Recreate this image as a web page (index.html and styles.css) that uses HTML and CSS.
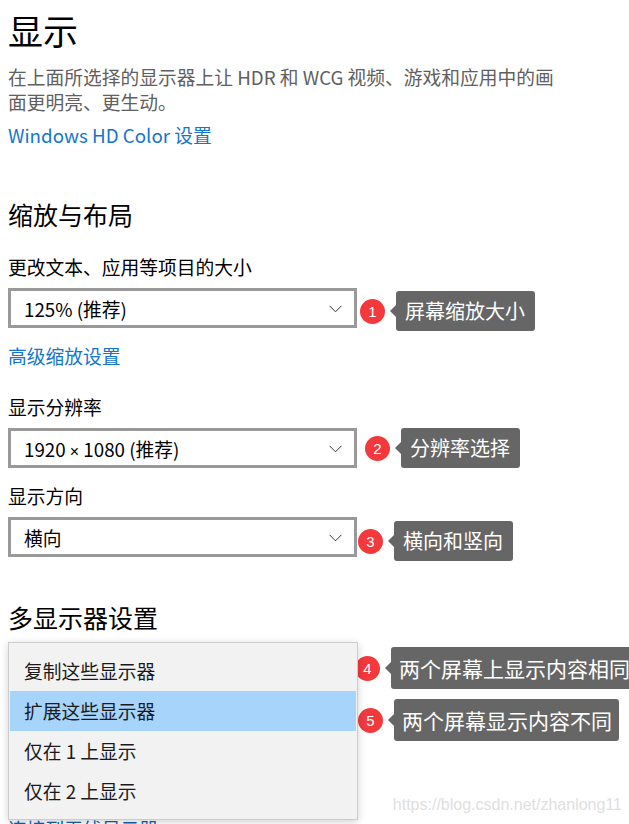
FILE: index.html
```html
<!DOCTYPE html>
<html lang="zh-CN">

<head>
    <meta charset="UTF-8">
    <meta name="viewport" content="width=device-width, initial-scale=1.0">
    <title>显示</title>
    <link rel="stylesheet" href="styles.css">
</head>

<body>
    <div class="page">
        <h1 class="title">显示</h1>
        <p class="desc">在上面所选择的显示器上让 HDR 和 WCG 视频、游戏和应用中的画面更明亮、更生动。</p>
        <a class="link link-hd" href="#">Windows HD Color 设置</a>

        <h2 class="subtitle">缩放与布局</h2>

        <div class="label label-first">更改文本、应用等项目的大小</div>
        <div class="row">
            <div class="combo">
                <span>125% (推荐)</span>
                <svg class="chev" width="13" height="8" viewBox="0 0 13 8"><path d="M0.5 0.8 L6.5 6.8 L12.5 0.8" fill="none" stroke="#333" stroke-width="1"/></svg>
            </div>
            <div class="note note-1">
                <span class="badge">1</span>
                <span class="tip">屏幕缩放大小</span>
            </div>
        </div>
        <a class="link link-adv" href="#">高级缩放设置</a>

        <div class="label label-res">显示分辨率</div>
        <div class="row">
            <div class="combo">
                <span>1920 <span class="times">×</span> 1080 (推荐)</span>
                <svg class="chev" width="13" height="8" viewBox="0 0 13 8"><path d="M0.5 0.8 L6.5 6.8 L12.5 0.8" fill="none" stroke="#333" stroke-width="1"/></svg>
            </div>
            <div class="note note-2">
                <span class="badge">2</span>
                <span class="tip">分辨率选择</span>
            </div>
        </div>

        <div class="label label-dir">显示方向</div>
        <div class="row">
            <div class="combo">
                <span>横向</span>
                <svg class="chev" width="13" height="8" viewBox="0 0 13 8"><path d="M0.5 0.8 L6.5 6.8 L12.5 0.8" fill="none" stroke="#333" stroke-width="1"/></svg>
            </div>
            <div class="note note-3">
                <span class="badge">3</span>
                <span class="tip">横向和竖向</span>
            </div>
        </div>

        <h2 class="subtitle subtitle-multi">多显示器设置</h2>

        <div class="multi">
            <ul class="menu">
                <li>复制这些显示器</li>
                <li class="active">扩展这些显示器</li>
                <li>仅在 1 上显示</li>
                <li>仅在 2 上显示</li>
            </ul>
            <div class="notes">
                <div class="note note-4">
                    <span class="badge">4</span>
                    <span class="tip">两个屏幕上显示内容相同</span>
                </div>
                <div class="note note-5">
                    <span class="badge">5</span>
                    <span class="tip">两个屏幕显示内容不同</span>
                </div>
            </div>
        </div>
        <a class="link link-under" href="#">连接到无线显示器</a>

        <div class="watermark">https://blog.csdn.net/zhanlong11</div>
    </div>
</body>

</html>
```

FILE: styles.css
```css
* {
    box-sizing: border-box;
}

body {
    margin: 0;
    background: #ffffff;
    font-family: "Noto Sans CJK SC", "Noto Sans", sans-serif;
    font-size: 18.75px;
    color: #000000;
    overflow: hidden;
}

.page {
    position: relative;
    width: 629px;
    height: 824px;
    padding: 10px 0 0 8px;
    overflow: hidden;
}

.title {
    margin: 0;
    font-size: 35px;
    font-weight: normal;
    line-height: 40px;
}

.desc {
    width: 556px;
    margin: 14px 0 0;
    color: #606060;
    line-height: 25px;
}

.link {
    display: block;
    color: #1275cf;
    text-decoration: none;
    line-height: 25px;
}

.link-hd {
    margin-top: 8px;
}

.subtitle {
    margin: 51px 0 0;
    font-size: 25px;
    font-weight: normal;
    line-height: 32px;
}

.subtitle-multi {
    margin-top: 44px;
}

.label {
    line-height: 25px;
}

.label-first {
    margin-top: 24px;
}

.label-res {
    margin-top: 26px;
}

.label-dir {
    margin-top: 15px;
}

.row {
    display: flex;
    align-items: center;
    height: 40px;
    margin-top: 9px;
}

.combo {
    display: flex;
    align-items: center;
    justify-content: space-between;
    flex-shrink: 0;
    width: 349px;
    height: 40px;
    padding: 0 12px 0 13px;
    border: 3px solid #999999;
    background: #ffffff;
}

.times {
    font-family: "Liberation Sans", sans-serif;
    font-size: 16px;
}

.chev {
    margin-top: 1px;
}

.link-adv {
    margin-top: 15px;
}

/* annotations */
.note {
    display: flex;
    align-items: center;
}

.badge {
    display: flex;
    align-items: center;
    justify-content: center;
    flex-shrink: 0;
    width: 25px;
    height: 25px;
    border-radius: 50%;
    background: #f3393c;
    color: #ffffff;
    font-family: "Liberation Sans", sans-serif;
    font-size: 15px;
}

.tip {
    position: relative;
    margin-left: 11px;
    padding: 0 10px 0 9px;
    height: 40px;
    line-height: 40px;
    border-radius: 3px;
    background: #666666;
    color: #ffffff;
    font-size: 20px;
    white-space: nowrap;
}

.tip::before {
    content: '';
    position: absolute;
    left: -6px;
    top: 50%;
    margin-top: -6px;
    border-top: 6px solid transparent;
    border-bottom: 6px solid transparent;
    border-right: 6px solid #666666;
}

.note-1 {
    margin-left: 3px;
    transform: translateY(3px);
}

.note-2 {
    margin-left: 8px;
}

.note-3 {
    margin-left: 1px;
    transform: translateY(4px);
}

/* multi-monitor menu */
.multi {
    display: flex;
    align-items: flex-start;
    margin-top: 9px;
}

.menu {
    position: relative;
    z-index: 1;
    flex-shrink: 0;
    width: 350px;
    margin: 0;
    padding: 8px 1px;
    list-style: none;
    background: #f2f2f2;
    border: 1px solid #cccccc;
    box-shadow: 0 2px 8px rgba(0, 0, 0, 0.18);
}

.menu li {
    height: 40px;
    line-height: 40px;
    padding-left: 14px;
    color: #1a1a1a;
}

.menu li.active {
    background: #a6d4fa;
}

.notes {
    display: flex;
    flex-direction: column;
    gap: 10px;
    padding-top: 5px;
}

.note-4 {
    margin-left: -3px;
}

.note-4 .tip,
.note-5 .tip {
    height: 42px;
    line-height: 42px;
    padding: 0 7px 0 8px;
    font-size: 21px;
}

.link-under {
    margin-top: -4px;
    color: #0f62b0;
}

.watermark {
    position: absolute;
    right: 7px;
    bottom: 10px;
    font-family: "Liberation Sans", sans-serif;
    font-size: 16px;
    color: #e0e0e0;
}
```
